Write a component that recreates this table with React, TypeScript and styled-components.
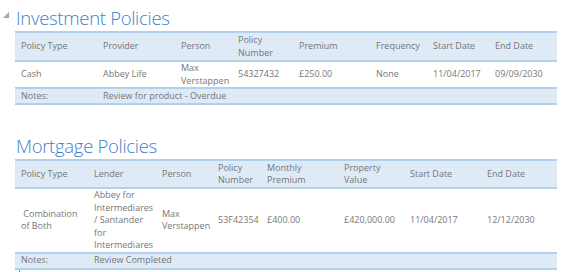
import React from "react"
import styled, { createGlobalStyle } from "styled-components"

const GlobalStyle = createGlobalStyle`
  body {
    margin: 0;
    background: #ffffff;
    font-family: "Open Sans", "Liberation Sans", sans-serif;
  }
`

const Page = styled.div`
  width: 571px;
  height: 272px;
  overflow: hidden;
  padding: 0 14px 0 15px;
  box-sizing: border-box;
`

const Section = styled.section<{ $gap: number }>`
  margin-top: ${({ $gap }) => $gap}px;
`

const Title = styled.h2`
  position: relative;
  margin: 0 0 1px;
  padding-left: 1px;
  font-size: 18.5px;
  font-weight: 300;
  line-height: 25px;
  color: #3d82c4;
  letter-spacing: -0.3px;
`

const Toggle = styled.span`
  position: absolute;
  left: -12px;
  top: 7px;
  width: 0;
  height: 0;
  border-left: 6px solid transparent;
  border-bottom: 6px solid #a6a6a6;
`

const Table = styled.table`
  width: 542px;
  border-collapse: collapse;
  table-layout: fixed;
  font-size: 9px;
  line-height: 12.5px;
  color: #777777;
  border-top: 2px solid #b3d0ec;
  border-bottom: 2px solid #b3d0ec;
`

const HeadRow = styled.tr<{ $height: number }>`
  height: ${({ $height }) => $height}px;
  background: #deeaf6;
  border-bottom: 2px solid #b3d0ec;
  th {
    font-weight: 400;
    text-align: left;
    vertical-align: middle;
    padding: 0 2px 0 6px;
  }
`

const DataRow = styled.tr<{ $height: number }>`
  height: ${({ $height }) => $height}px;
  border-bottom: 2px solid #b3d0ec;
  td {
    vertical-align: middle;
    padding: 0 2px 0 6px;
  }
`

const NotesRow = styled.tr`
  height: 16px;
  background: #deeaf6;
  td {
    vertical-align: middle;
    padding: 0 2px 0 6px;
  }
`

const Cursor = styled.div`
  width: 1px;
  height: 5px;
  margin-left: 4px;
  background: #8a8a8a;
`

type Col = { label: React.ReactNode; width: number }

const investCols: Col[] = [
  { label: "Policy Type", width: 82 },
  { label: "Provider", width: 78 },
  { label: "Person", width: 57 },
  { label: <>Policy<br />Number</>, width: 61 },
  { label: "Premium", width: 77 },
  { label: "Frequency", width: 57 },
  { label: "Start Date", width: 62 },
  { label: "End Date", width: 68 },
]

const mortgageCols: Col[] = [
  { label: "Policy Type", width: 73 },
  { label: "Lender", width: 68 },
  { label: "Person", width: 56 },
  { label: <>Policy<br />Number</>, width: 49 },
  { label: <>Monthly<br />Premium</>, width: 77 },
  { label: <>Property<br />Value</>, width: 66 },
  { label: "Start Date", width: 77 },
  { label: "End Date", width: 76 },
]

function PolicyTable({ cols, row, notes, headH, rowH }: {
  cols: Col[],
  row: React.ReactNode[],
  notes: string,
  headH: number,
  rowH: number,
}) {
  return (
    <Table>
      <colgroup>
        {cols.map((c, i) => <col key={i} style={{ width: c.width }} />)}
      </colgroup>
      <thead>
        <HeadRow $height={headH}>
          {cols.map((c, i) => <th key={i}>{c.label}</th>)}
        </HeadRow>
      </thead>
      <tbody>
        <DataRow $height={rowH}>
          {row.map((v, i) => <td key={i}>{v}</td>)}
        </DataRow>
        <NotesRow>
          <td>Notes:</td>
          <td colSpan={cols.length - 1}>{notes}</td>
        </NotesRow>
      </tbody>
    </Table>
  )
}

export default function App() {
  return (
    <>
      <GlobalStyle />
      <Page>
        <Section $gap={5}>
          <Title><Toggle />Investment Policies</Title>
          <PolicyTable
            cols={investCols}
            headH={29}
            rowH={25}
            notes="Review for product - Overdue"
            row={[
              "Cash",
              "Abbey Life",
              <>Max<br />Verstappen</>,
              "54327432",
              "£250.00",
              "None",
              "11/04/2017",
              "09/09/2030",
            ]}
          />
        </Section>
        <Section $gap={28}>
          <Title>Mortgage Policies</Title>
          <PolicyTable
            cols={mortgageCols}
            headH={28}
            rowH={62}
            notes="Review Completed"
            row={[
              <>&nbsp;Combination of Both</>,
              <>Abbey for Intermediares / Santander for Intermediares</>,
              <>Max<br />Verstappen</>,
              "53F42354",
              "£400.00",
              "£420,000.00",
              "11/04/2017",
              "12/12/2030",
            ]}
          />
          <Cursor />
        </Section>
      </Page>
    </>
  )
}
